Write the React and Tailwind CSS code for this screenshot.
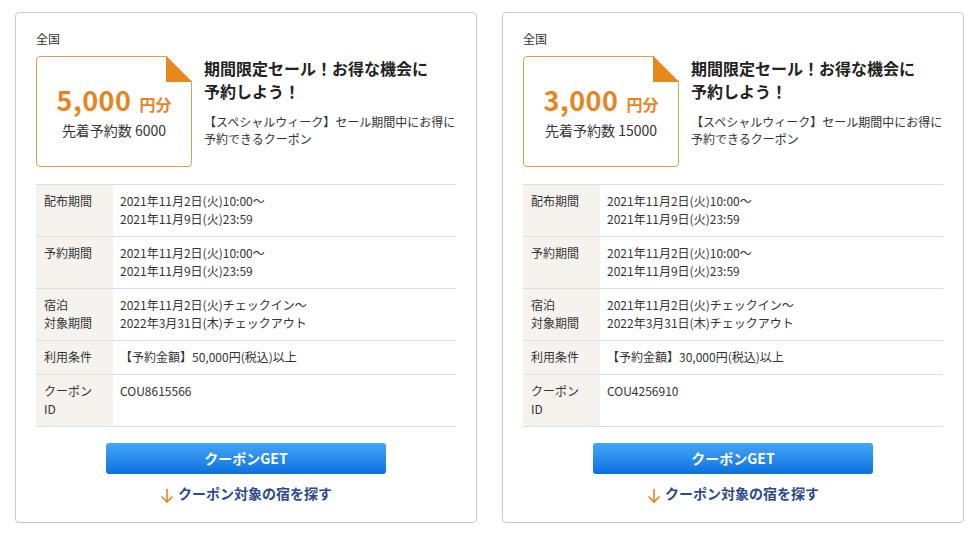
import React from 'react';

const font = { fontFamily: '"Noto Sans CJK JP", "Noto Sans", sans-serif' };

const coupons = [
  {
    amount: '5,000',
    count: '6000',
    condition: '【予約金額】50,000円(税込)以上',
    id: 'COU8615566',
  },
  {
    amount: '3,000',
    count: '15000',
    condition: '【予約金額】30,000円(税込)以上',
    id: 'COU4256910',
  },
];

function Row({ label, children }) {
  return (
    <div className="flex border-b border-[#dedede]">
      <div className="w-[77px] shrink-0 bg-[#f6f3ef] pl-2 pt-[7px] pb-[8px] leading-[18px] text-[#333]">
        {label}
      </div>
      <div className="flex-1 pl-[7px] pt-[7px] pb-[8px] leading-[18px] text-[#333]">
        {children}
      </div>
    </div>
  );
}

function CouponCard({ c }) {
  return (
    <div className="w-[462px] h-[511px] border border-[#c8c8c8] rounded-[4px] bg-white px-[20px] pt-[17px]">
      <div className="text-[12px] leading-[18px] text-[#333]">全国</div>

      {/* coupon head */}
      <div className="flex mt-[8px]">
        <div className="relative w-[156px] h-[111px] shrink-0">
          <div
            className="absolute inset-0 border border-[#d9a24f] rounded-[4px] bg-white"
            style={{ clipPath: 'polygon(0 0, 131px 0, 156px 25px, 156px 100%, 0 100%)' }}
          />
          <svg className="absolute right-0 top-0" width="26" height="26" viewBox="0 0 26 26">
            <polygon points="0,0 0,26 26,26" fill="#e8891e" />
            <line x1="0" y1="0" x2="26" y2="26" stroke="#d9a24f" strokeWidth="1" />
          </svg>
          <div className="relative flex flex-col items-center pt-[28px]">
            <div className="flex items-baseline font-bold text-[#e8841f]">
              <span className="text-[27px] leading-[32px] tracking-[0.5px]">{c.amount}</span>
              <span className="text-[16px] ml-[8px]">円分</span>
            </div>
            <div className="text-[14px] leading-[18px] text-[#333] mt-[5px]">
              先着予約数 {c.count}
            </div>
          </div>
        </div>
        <div className="ml-[12px] pt-[1px]">
          <div className="text-[16px] font-bold leading-[23px] text-[#222]">
            期間限定セール！お得な機会に
            <br />
            予約しよう！
          </div>
          <div className="text-[12px] leading-[17px] text-[#333] mt-[10px]">
            【スペシャルウィーク】セール期間中にお得に
            <br />
            予約できるクーポン
          </div>
        </div>
      </div>

      {/* details */}
      <div className="mt-[17px] border-t border-[#dedede] text-[12px]">
        <Row label="配布期間">
          2021年11月2日(火)10:00～
          <br />
          2021年11月9日(火)23:59
        </Row>
        <Row label="予約期間">
          2021年11月2日(火)10:00～
          <br />
          2021年11月9日(火)23:59
        </Row>
        <Row label={<>宿泊<br />対象期間</>}>
          2021年11月2日(火)チェックイン～
          <br />
          2022年3月31日(木)チェックアウト
        </Row>
        <Row label="利用条件">{c.condition}</Row>
        <Row label={<>クーポン<br />ID</>}>{c.id}</Row>
      </div>

      <div className="flex flex-col items-center">
        <button className="mt-[16px] w-[280px] h-[31px] rounded-[3px] bg-gradient-to-b from-[#42a6f6] to-[#0a70e0] text-white text-[14px] font-bold">
          クーポンGET
        </button>
        <a className="mt-[8px] flex items-center text-[14px] font-bold text-[#2b4a8b] leading-[20px]">
          <svg width="14" height="16" viewBox="0 0 14 16" className="mr-[4px] mt-[6px]">
            <path d="M7 1 V14 M1.5 8.5 L7 14 L12.5 8.5" fill="none" stroke="#e8841f" strokeWidth="1.6" />
          </svg>
          クーポン対象の宿を探す
        </a>
      </div>
    </div>
  );
}

export default function App() {
  return (
    <div className="w-[977px] h-[536px] bg-white pl-[15px] pt-[12px]" style={font}>
      <div className="flex gap-[25px]">
        {coupons.map((c) => (
          <CouponCard key={c.id} c={c} />
        ))}
      </div>
    </div>
  );
}
